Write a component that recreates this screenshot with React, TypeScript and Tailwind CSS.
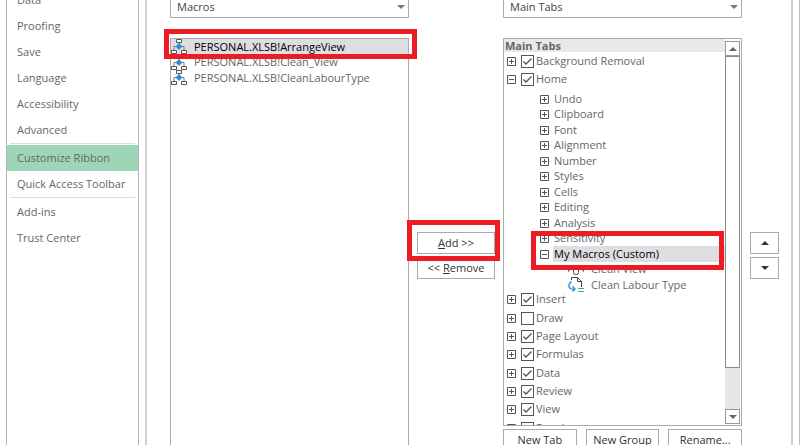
import { ReactNode, useState } from "react";
import clsx from "clsx";

const macros = ["ArrangeView", "Clean_View", "CleanLabourType"];

const sections = [
  ["Data", "Proofing", "Save", "Language", "Accessibility", "Advanced"],
  ["Customize Ribbon", "Quick Access Toolbar"],
  ["Add-ins", "Trust Center"],
];

const homeGroups = [
  "Undo",
  "Clipboard",
  "Font",
  "Alignment",
  "Number",
  "Styles",
  "Cells",
  "Editing",
  "Analysis",
  "Sensitivity",
];

const tabs = [
  { name: "Background Removal", checked: true },
  { name: "Home", checked: true, open: true },
  { name: "Insert", checked: true },
  { name: "Draw", checked: false },
  { name: "Page Layout", checked: true },
  { name: "Formulas", checked: true },
  { name: "Data", checked: true },
  { name: "Review", checked: true },
  { name: "View", checked: true },
  { name: "Developer", checked: true },
];

function MacroIcon() {
  return (
    <svg className="h-4 w-4 shrink-0" viewBox="0 0 16 16" fill="none">
      <path d="M8 3v2M5 7.5H3V11M11 7.5h2V11" stroke="#777" />
      <path
        d="M5.5 .5h5v3h-5zM.5 11.5h5v3h-5zM10.5 11.5h5v3h-5z"
        fill="#fff"
        stroke="#555"
      />
      <path d="M8 4.5 11 7.5 8 10.5 5 7.5z" fill="#2b88d0" stroke="#3c93d4" />
    </svg>
  );
}

function CleanViewIcon() {
  return (
    <svg className="h-4 w-4 shrink-0" viewBox="0 0 16 16" fill="none">
      <path d="M0 8.500h1.500M14.500 8.500H16" stroke="#555" strokeWidth="2" />
      <rect x="5.5" y="5.5" width="5" height="7" rx="2" stroke="#444" />
    </svg>
  );
}

function LabourIcon() {
  return (
    <svg className="h-4 w-4 shrink-0" viewBox="0 0 16 16" fill="none">
      <path d="M3.5 3V.5h6l4 4V10" stroke="#444" />
      <path d="M9.5.5v4h4" stroke="#444" />
      <path
        d="M3.500 4.500C.5 6 0 10 2.500 11.500c1 .7 2.500.8 4 .5M4.500 9.500 7 12l-2.500 2.500"
        stroke="#2e9bd6"
        strokeWidth="1.500"
      />
      <path d="M10 11.500h6M10 14.500h6" stroke="#3fae5a" />
    </svg>
  );
}

function Arrow({ up, className }: { up?: boolean; className?: string }) {
  return (
    <svg className={clsx("h-1 w-2", className)} viewBox="0 0 8 4">
      <path d={up ? "M0 4h8L4 0z" : "M0 0h8L4 4z"} fill="currentColor" />
    </svg>
  );
}

function Expander({ open, label }: { open?: boolean; label: string }) {
  return (
    <button aria-label={label} aria-expanded={!!open} className="shrink-0">
      <svg className="block h-[9px] w-[9px]" viewBox="0 0 9 9" fill="none">
        <path d="M.5.5h8v8h-8zM2 4.5h5" stroke="#555" />
        {!open && <path d="M4.500 2v5" stroke="#555" />}
      </svg>
    </button>
  );
}

function Highlight({ className }: { className: string }) {
  return (
    <span
      className={clsx(
        "pointer-events-none absolute z-10 border-[5px] border-[#ed1c24]",
        className
      )}
    />
  );
}

interface PickerProps {
  id: string;
  label: string;
  value: string;
}
function Picker({ id, label, value }: PickerProps) {
  return (
    <div className="relative mb-5">
      <label htmlFor={id} className="sr-only">
        {label}
      </label>
      <select
        id={id}
        className="block h-6 w-full appearance-none border border-[#ababab] bg-white px-1.5 pt-0.5 text-[#444]"
      >
        <option>{value}</option>
      </select>
      <Arrow className="pointer-events-none absolute right-1 top-[11px] text-[#777]" />
    </div>
  );
}

interface ActionProps {
  className?: string;
  label?: string;
  children: ReactNode;
}
function Action({ className, label, children }: ActionProps) {
  return (
    <button
      aria-label={label}
      className={clsx(
        "flex h-[22px] items-center justify-center whitespace-nowrap border border-[#ababab] bg-white text-[#333]",
        className
      )}
    >
      {children}
    </button>
  );
}

function Sidebar() {
  return (
    <nav className="w-[133px] shrink-0 border-x border-[#b5b5b5] pt-px">
      {sections.map((items, i) => (
        <ul key={i} className={clsx(i > 0 && "relative pt-0.5")}>
          {i > 0 && (
            <li className="absolute inset-x-[3px] top-0 h-px bg-[#dcdcdc]" />
          )}
          {items.map((item) => (
            <li key={item}>
              <a
                href="#"
                className={clsx(
                  "flex h-[26px] items-center whitespace-nowrap pl-2.5",
                  item === "Customize Ribbon" && "bg-[#9fd5b7]"
                )}
              >
                {item}
              </a>
            </li>
          ))}
        </ul>
      ))}
    </nav>
  );
}

function TabRow({ name, checked, open }: (typeof tabs)[number]) {
  const [on, setOn] = useState(checked);

  return (
    <div className="flex h-[18px] items-center pl-[3px]">
      <Expander open={open} label={`Toggle ${name}`} />
      <label className="flex items-center whitespace-nowrap pl-[5px]">
        <span className="relative mr-0.5 h-[13px] w-[13px]">
          <input
            type="checkbox"
            checked={on}
            onChange={() => setOn(!on)}
            className="block h-[13px] w-[13px] appearance-none border border-[#555] bg-white"
          />
          {on && (
            <svg
              className="pointer-events-none absolute inset-0"
              viewBox="0 0 13 13"
              fill="none"
            >
              <path
                d="M2.500 6.500 5 9l5.500-5.500"
                stroke="#555"
                strokeWidth="1.400"
              />
            </svg>
          )}
        </span>
        {name}
      </label>
    </div>
  );
}

function HomeGroups() {
  const row = "flex items-center whitespace-nowrap odd:h-4 even:h-[15px]";

  return (
    <ul className="-mb-[3px] pl-9 pt-[3px]">
      {homeGroups.map((name) => (
        <li key={name} className={row}>
          <Expander label={`Toggle ${name}`} />
          <span className="pl-[5px]">{name}</span>
        </li>
      ))}
      <li className={clsx(row, "relative")}>
        <Expander open label="Toggle My Macros" />
        <span className="ml-1 flex-1 bg-[#dedde2] pl-px leading-4 text-black">
          My Macros (Custom)
        </span>
        <Highlight className="-bottom-2 -left-[9px] -top-[15px] right-px" />
      </li>
      <li className={clsx(row, "gap-[7px] pl-7")}>
        <CleanViewIcon />
        Clean View
      </li>
      <li className={clsx(row, "gap-[7px] pl-7")}>
        <LabourIcon />
        Clean Labour Type
      </li>
    </ul>
  );
}

function ScrollBar() {
  const end =
    "flex h-[15px] shrink-0 items-center justify-center border border-[#999] bg-white text-[#666]";

  return (
    <div className="mb-px mr-px mt-0.5 flex w-[15px] shrink-0 flex-col bg-[#e6e6e6]">
      <button aria-label="Scroll up" className={end}>
        <Arrow up />
      </button>
      <div className="h-[312px] border border-[#888] bg-white" />
      <button aria-label="Scroll down" className={clsx(end, "mt-auto")}>
        <Arrow />
      </button>
    </div>
  );
}

function App() {
  return (
    <div className="h-screen overflow-hidden bg-white font-['Open_Sans',sans-serif] text-[11px] text-[#666]">
      <div className="-mt-3.5 flex min-h-[120vh] border-r border-[#bbb] pl-1.5 pr-1.5">
        <Sidebar />

        <main className="ml-1.5 flex flex-1 border-x-2 border-[#d0d0d0] pl-[23px] pr-3 pt-2">
          <section className="flex flex-1 flex-col">
            <Picker id="commands" label="Choose commands from" value="Macros" />
            <ul className="flex-1 border border-[#ababab]">
              {macros.map((name, i) => (
                <li
                  key={name}
                  className={clsx(
                    "relative flex items-center gap-[7px] whitespace-nowrap odd:h-4 even:h-[15px]",
                    i === 0 && "bg-[#dedde2] text-black"
                  )}
                >
                  <MacroIcon />
                  PERSONAL.XLSB!{name}
                  {i === 0 && (
                    <Highlight className="-bottom-1 -left-[7px] -right-[9px] -top-2.5" />
                  )}
                </li>
              ))}
            </ul>
          </section>

          <div className="mx-2 flex w-[78px] flex-col gap-[3px] pt-[238px]">
            <div className="relative">
              <Action className="w-full">
                <u>A</u>dd &gt;&gt;
              </Action>
              <Highlight className="-bottom-[7px] -left-2.5 -right-[5px] -top-3" />
            </div>
            <Action>
              &lt;&lt;&nbsp;<u>R</u>emove
            </Action>
          </div>

          <section className="flex-1">
            <Picker id="ribbon" label="Customize the Ribbon" value="Main Tabs" />
            <div className="flex h-[388px] overflow-hidden border border-[#ababab]">
              <div className="min-w-0 flex-1">
                <h2 className="h-[13px] bg-[#e9e9e9] pl-px font-bold leading-3.5">
                  Main Tabs
                </h2>
                <ul>
                  {tabs.map((tab) => (
                    <li key={tab.name} className="nth-[3n]:pb-px">
                      <TabRow {...tab} />
                      {tab.open && <HomeGroups />}
                    </li>
                  ))}
                </ul>
              </div>
              <ScrollBar />
            </div>
            <div className="mt-[3px] flex gap-[9px]">
              <Action className="flex-1">New Tab</Action>
              <Action className="flex-1">New Group</Action>
              <Action className="flex-1">Rename...</Action>
            </div>
          </section>

          <div className="ml-2 flex w-[29px] flex-col gap-[3px] pt-[238px]">
            <Action label="Move up">
              <Arrow up />
            </Action>
            <Action label="Move down">
              <Arrow />
            </Action>
          </div>
        </main>
      </div>
    </div>
  );
}

export default App;
